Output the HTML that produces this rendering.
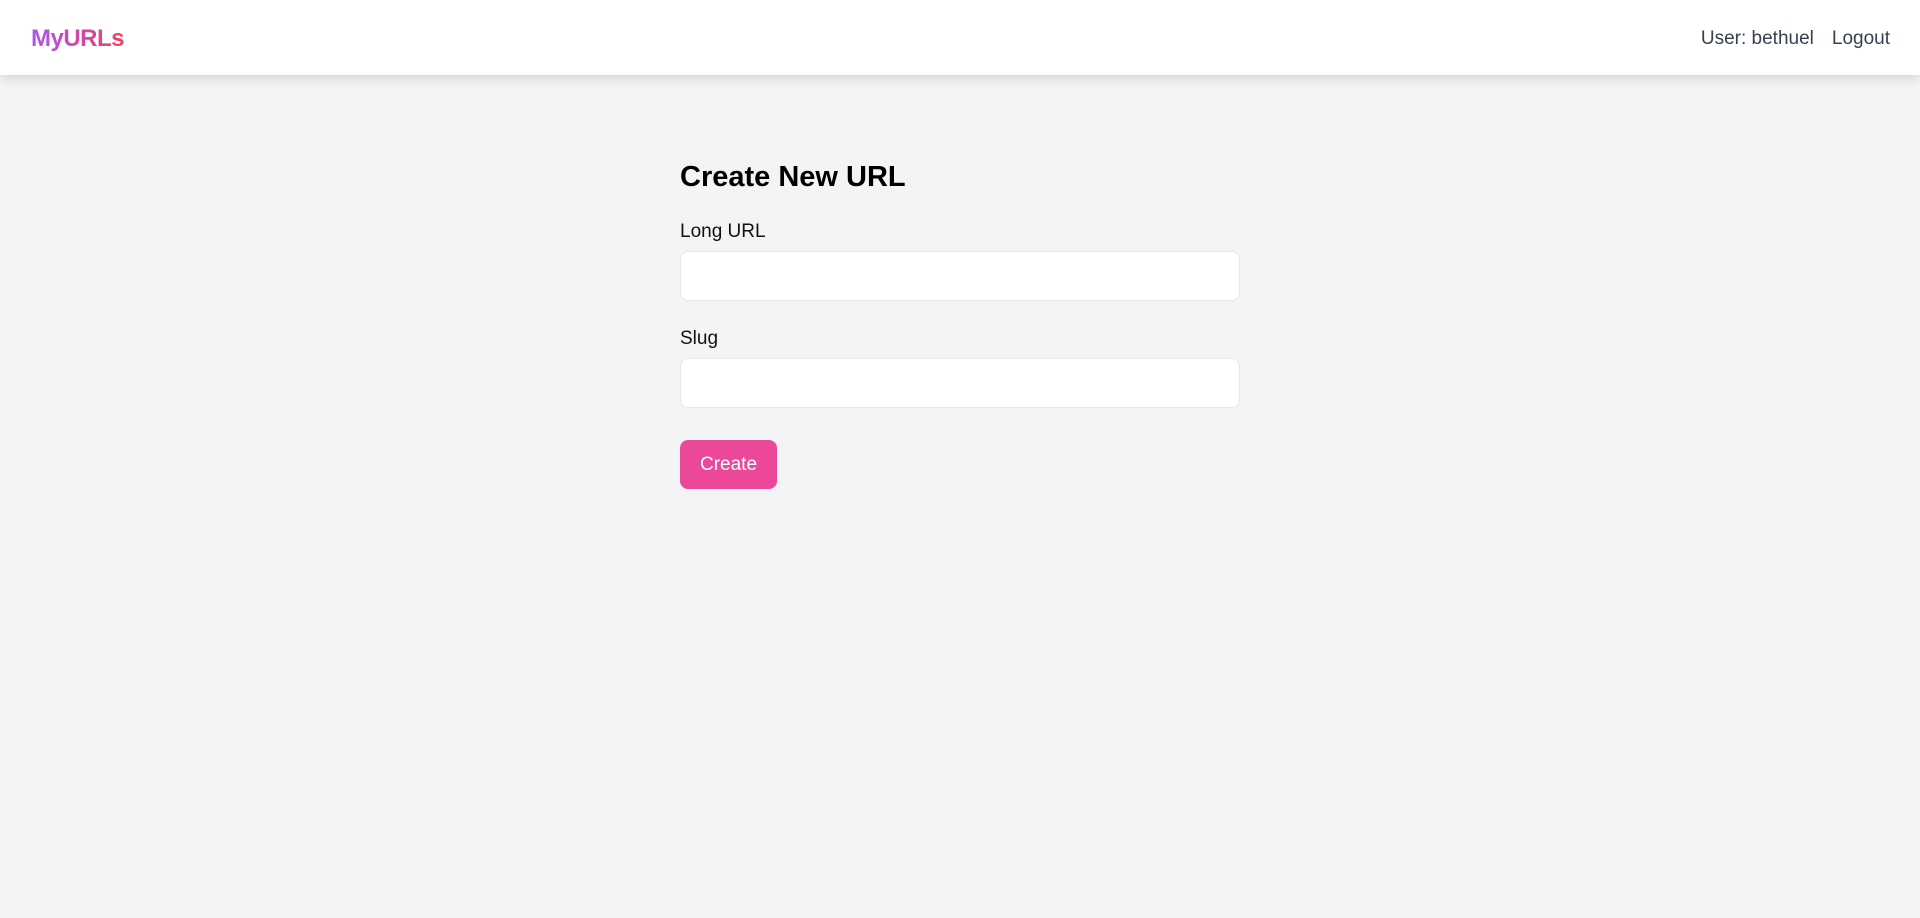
<!DOCTYPE html>
<html><head><meta charset="utf-8"><style>
*{box-sizing:border-box;margin:0;padding:0}
body{width:1920px;height:918px;background:#f3f4f6;font-family:"Liberation Sans",sans-serif;overflow:hidden;position:relative}
nav{position:absolute;left:0;top:0;width:1920px;height:75px;background:#fff;box-shadow:0 4px 10px rgba(0,0,0,0.12)}
.logo{position:absolute;left:31px;top:25px;font-size:24px;font-weight:bold;background:linear-gradient(90deg,#a855f7,#f43f5e);-webkit-background-clip:text;background-clip:text;color:transparent;letter-spacing:-0.5px}
.right{position:absolute;right:30px;top:28px;font-size:19px;color:#374151}
.right span{margin-left:18px}
h1{position:absolute;left:680px;top:161px;font-size:29px;font-weight:bold;color:#000}
label{position:absolute;left:680px;font-size:19px;color:#111}
.in{position:absolute;left:680px;width:560px;height:50px;background:#fff;border:1px solid #e5e7eb;border-radius:8px}
.btn{position:absolute;left:680px;top:440px;width:97px;height:49px;background:#ec4899;border-radius:8px;color:#fff;font-size:19px;text-align:center;line-height:49px}
</style></head><body>
<nav><div class="logo">MyURLs</div><div class="right">User: bethuel<span>Logout</span></div></nav>
<h1>Create New URL</h1>
<label style="top:221px">Long URL</label>
<div class="in" style="top:251px"></div>
<label style="top:328px">Slug</label>
<div class="in" style="top:358px"></div>
<div class="btn">Create</div>
</body></html>
